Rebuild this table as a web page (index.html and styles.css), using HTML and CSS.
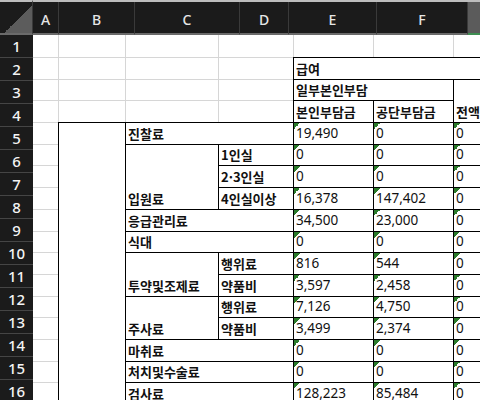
FILE: index.html
```html
<!DOCTYPE html>
<html lang="ko">
<head>
<meta charset="utf-8">
<title>Sheet</title>
<link rel="stylesheet" href="styles.css">
</head>
<body>
<div class="app">
  <div class="corner"></div>
  <div class="colheads">
    <div class="ch ch-a">A</div>
    <div class="ch ch-b">B</div>
    <div class="ch ch-c">C</div>
    <div class="ch ch-d">D</div>
    <div class="ch ch-e">E</div>
    <div class="ch ch-f">F</div>
    <div class="ch ch-g"></div>
  </div>
  <div class="rowheads">
    <div class="rh">1</div>
    <div class="rh">2</div>
    <div class="rh">3</div>
    <div class="rh">4</div>
    <div class="rh">5</div>
    <div class="rh">6</div>
    <div class="rh">7</div>
    <div class="rh">8</div>
    <div class="rh">9</div>
    <div class="rh">10</div>
    <div class="rh">11</div>
    <div class="rh">12</div>
    <div class="rh">13</div>
    <div class="rh">14</div>
    <div class="rh">15</div>
    <div class="rh">16</div>
  </div>
  <div class="sheet">
    <!-- row 1 -->
    <div class="c"></div><div class="c"></div><div class="c"></div><div class="c"></div><div class="c"></div><div class="c"></div><div class="c"></div>
    <!-- row 2 -->
    <div class="c"></div><div class="c"></div><div class="c"></div><div class="c"></div>
    <div class="c b lbl cs3">급여</div>
    <!-- row 3 -->
    <div class="c"></div><div class="c"></div><div class="c"></div><div class="c"></div>
    <div class="c b lbl cs2">일부본인부담</div>
    <div class="c b lbl rs2">전액본인부담</div>
    <!-- row 4 -->
    <div class="c"></div><div class="c"></div><div class="c"></div><div class="c"></div>
    <div class="c b lbl">본인부담금</div>
    <div class="c b lbl">공단부담금</div>
    <!-- row 5 -->
    <div class="c"></div>
    <div class="c b rs13"></div>
    <div class="c b lbl cs2">진찰료</div>
    <div class="c b v">19,490</div><div class="c b v">0</div><div class="c b v">0</div>
    <!-- row 6 -->
    <div class="c"></div>
    <div class="c b lbl rs3">입원료</div>
    <div class="c b lbl">1인실</div>
    <div class="c b v">0</div><div class="c b v">0</div><div class="c b v">0</div>
    <!-- row 7 -->
    <div class="c"></div>
    <div class="c b lbl">2·3인실</div>
    <div class="c b v">0</div><div class="c b v">0</div><div class="c b v">0</div>
    <!-- row 8 -->
    <div class="c"></div>
    <div class="c b lbl">4인실이상</div>
    <div class="c b v">16,378</div><div class="c b v">147,402</div><div class="c b v">0</div>
    <!-- row 9 -->
    <div class="c"></div>
    <div class="c b lbl cs2">응급관리료</div>
    <div class="c b v">34,500</div><div class="c b v">23,000</div><div class="c b v">0</div>
    <!-- row 10 -->
    <div class="c"></div>
    <div class="c b lbl cs2">식대</div>
    <div class="c b v">0</div><div class="c b v">0</div><div class="c b v">0</div>
    <!-- row 11 -->
    <div class="c"></div>
    <div class="c b lbl rs2">투약및조제료</div>
    <div class="c b lbl">행위료</div>
    <div class="c b v">816</div><div class="c b v">544</div><div class="c b v">0</div>
    <!-- row 12 -->
    <div class="c"></div>
    <div class="c b lbl">약품비</div>
    <div class="c b v">3,597</div><div class="c b v">2,458</div><div class="c b v">0</div>
    <!-- row 13 -->
    <div class="c"></div>
    <div class="c b lbl rs2">주사료</div>
    <div class="c b lbl">행위료</div>
    <div class="c b v">7,126</div><div class="c b v">4,750</div><div class="c b v">0</div>
    <!-- row 14 -->
    <div class="c"></div>
    <div class="c b lbl">약품비</div>
    <div class="c b v">3,499</div><div class="c b v">2,374</div><div class="c b v">0</div>
    <!-- row 15 -->
    <div class="c"></div>
    <div class="c b lbl cs2">마취료</div>
    <div class="c b v">0</div><div class="c b v">0</div><div class="c b v">0</div>
    <!-- row 16 -->
    <div class="c"></div>
    <div class="c b lbl cs2">처치및수술료</div>
    <div class="c b v">0</div><div class="c b v">0</div><div class="c b v">0</div>
    <!-- row 17 -->
    <div class="c"></div>
    <div class="c b lbl cs2">검사료</div>
    <div class="c b v">128,223</div><div class="c b v">85,484</div><div class="c b v">0</div>
  </div>
</div>
</body>
</html>
```
FILE: styles.css
```css
* {
  box-sizing: border-box;
  margin: 0;
  padding: 0;
}

html,
body {
  width: 480px;
  height: 400px;
  overflow: hidden;
  background: #ffffff;
}

body {
  font-family: "Noto Sans", sans-serif;
}

.app {
  display: grid;
  grid-template-columns: 33px 447px;
  grid-template-rows: 35px 365px;
  width: 480px;
  height: 400px;
  overflow: hidden;
}

/* ---------- headers ---------- */
.corner {
  border-top: 2px solid #bdbdbd;
  border-bottom: 2px solid #6a6a6a;
  border-right: 1px solid #3a3a3a;
  background:
    linear-gradient(to bottom right, transparent 50%, #5c5c5c 50%) right 0 bottom 0 / 28px 28px no-repeat,
    #1b1b1b;
}

.colheads {
  display: flex;
  border-top: 2px solid #bdbdbd;
  background: #1b1b1b;
  overflow: hidden;
}

.ch {
  flex: none;
  height: 33px;
  display: flex;
  align-items: center;
  justify-content: center;
  padding-top: 4px;
  border-right: 1px solid #3a3a3a;
  border-bottom: 2px solid #6a6a6a;
  color: #e6e6e6;
  font-size: 14px;
  font-weight: 500;
  line-height: 16px;
}

.ch-a { width: 26px; }
.ch-b { width: 76px; }
.ch-c { width: 105px; }
.ch-d { width: 49px; }
.ch-e { width: 88px; }
.ch-f { width: 91px; }

.ch-g {
  flex: 1;
  background: #5b5b5b;
  border-right: none;
  border-bottom: 2px solid #3e8e52;
}

.rowheads {
  display: flex;
  flex-direction: column;
  background: #1b1b1b;
  overflow: hidden;
}

.rh {
  flex: none;
  height: 23px;
  display: flex;
  align-items: center;
  justify-content: center;
  border-bottom: 1px solid #454545;
  color: #f4f4f4;
  font-size: 15px;
  font-weight: 500;
  line-height: 16px;
}

/* ---------- sheet ---------- */
.sheet {
  display: grid;
  grid-template-columns: 26px 67px 93px 75px 80px 80px 140px;
  grid-template-rows: 23px repeat(16, 21.7px);
  overflow: hidden;
}

.c {
  min-width: 0;
  display: flex;
  align-items: flex-end;
  padding: 0 0 4px 2px;
  border-right: 1px solid #d6d6d6;
  border-bottom: 1px solid #d6d6d6;
  background: #ffffff;
  color: #111111;
  font-size: 13px;
  line-height: 13px;
  white-space: nowrap;
}

.b {
  margin: -1px 0 0 -1px;
  border: 1px solid #000000;
  z-index: 1;
}

.lbl {
  font-family: "Noto Sans CJK KR", sans-serif;
  font-weight: 700;
}

.v {
  font-family: "Noto Sans", sans-serif;
  font-size: 13.5px;
  background:
    linear-gradient(135deg, #2b7b2b 50%, transparent 50%) 0 0 / 6px 6px no-repeat,
    #ffffff;
}

.cs2 { grid-column: span 2; }
.cs3 { grid-column: span 3; }
.rs2 { grid-row: span 2; }
.rs3 { grid-row: span 3; }
.rs13 { grid-row: span 13; }
```
